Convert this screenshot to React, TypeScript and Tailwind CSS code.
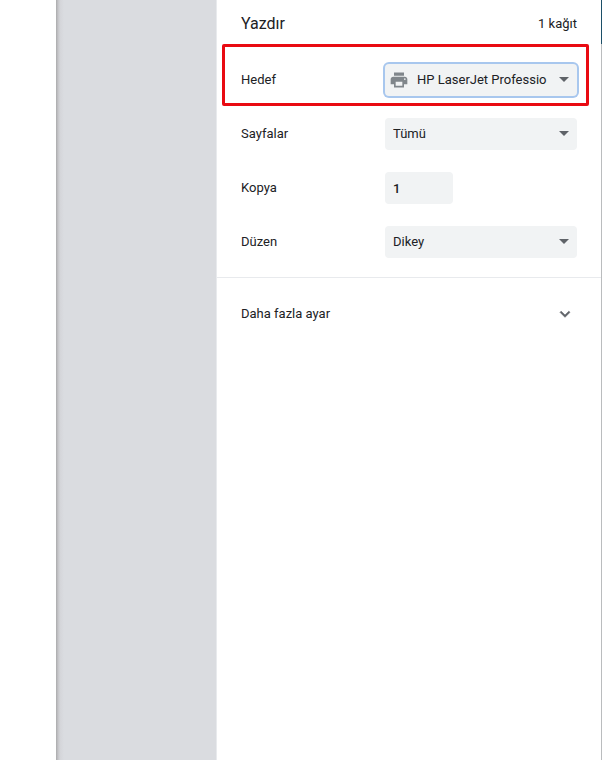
import { ReactNode } from 'react';
import { clsx } from 'clsx';

type SelectProps = {
  id: string;
  options: string[];
  icon?: ReactNode;
  focused?: boolean;
};

const PrinterIcon = () => (
  <svg viewBox="0 0 24 24" className="w-5 h-5" fill="#80868b" aria-hidden="true">
    <path d="M19 8H5c-1.66 0-3 1.34-3 3v6h4v4h12v-4h4v-6c0-1.66-1.34-3-3-3zm-3 11H8v-5h8v5zm3-7c-.55 0-1-.45-1-1s.45-1 1-1 1 .45 1 1-.45 1-1 1zm-1-9H6v4h12V3z" />
  </svg>
);

const ExpandIcon = () => (
  <svg viewBox="0 0 24 24" className="w-5 h-5 mr-0.5" fill="#5f6368" stroke="#5f6368" strokeWidth="0.7" aria-hidden="true">
    <path d="M16.59 8.59L12 13.17 7.41 8.59 6 10l6 6 6-6z" />
  </svg>
);

const Select = ({ id, options, icon, focused }: SelectProps) => (
  <div className="relative w-48 h-8">
    <select
      id={id}
      className={clsx(
        'appearance-none w-full h-8 rounded bg-[#f1f3f4] pr-7 text-[13px] text-[#202124] outline-none',
        icon ? 'pl-8' : 'pl-2',
        focused && 'ring-2 ring-[#a8c7ee]',
      )}
    >
      {options.map((option) => (
        <option key={option}>{option}</option>
      ))}
    </select>
    {icon && <span className="absolute left-1 top-1.5 pointer-events-none">{icon}</span>}
    <svg viewBox="0 0 10 5" className="absolute right-2 top-[13px] w-[10px] h-[5px] pointer-events-none" fill="#5f6368" aria-hidden="true">
      <path d="M0 0h10L5 5z" />
    </svg>
  </div>
);

const Row = ({ id, label, children }: { id: string; label: string; children: ReactNode }) => (
  <div className="flex items-center h-8">
    <label htmlFor={id} className="w-36">{label}</label>
    {children}
  </div>
);

export default function App() {
  return (
    <div className="flex min-h-screen bg-white font-['Roboto',sans-serif] text-[13px] text-[#202124]">
      <div className="w-14 shrink-0" />

      {/* Preview area */}
      <div className="flex-1 bg-[linear-gradient(to_right,#aaaaac_0px,#c4c4c7_2px,#d4d5d9_4px,#dadce0_8px)]" />

      <aside className="w-[385px] shrink-0 border-l border-[#e8eaed]">
        <header className="flex items-center justify-between h-11 px-6 pt-1">
          <h1 className="text-base">Yazdır</h1>
          <span>1 kağıt</span>
        </header>

        {/* Highlighted destination */}
        <div className="ml-[5px] mr-3 pl-4 pt-[17px] pb-[7px] border-3 border-[#e90a12] rounded-xs">
          <Row id="destination" label="Hedef">
            <Select id="destination" options={['HP LaserJet Professio']} icon={<PrinterIcon />} focused />
          </Row>
        </div>

        <div className="flex flex-col gap-[22px] pl-6 pt-3 pb-[19px] border-b border-[#e8eaed]">
          <Row id="pages" label="Sayfalar">
            <Select id="pages" options={['Tümü', 'Özel']} />
          </Row>
          <Row id="copies" label="Kopya">
            <input id="copies" type="text" defaultValue="1" className="w-17 h-8 px-2 rounded bg-[#f1f3f4] font-medium outline-none" />
          </Row>
          <Row id="layout" label="Düzen">
            <Select id="layout" options={['Dikey', 'Yatay']} />
          </Row>
        </div>

        <button type="button" className="flex items-center justify-between w-full h-18 px-6">
          Daha fazla ayar
          <ExpandIcon />
        </button>
      </aside>

      {/* Window edge */}
      <div className="w-px shrink-0 bg-[#babcbe]">
        <div className="h-11 bg-[#1c4f68]" />
      </div>
    </div>
  );
}
